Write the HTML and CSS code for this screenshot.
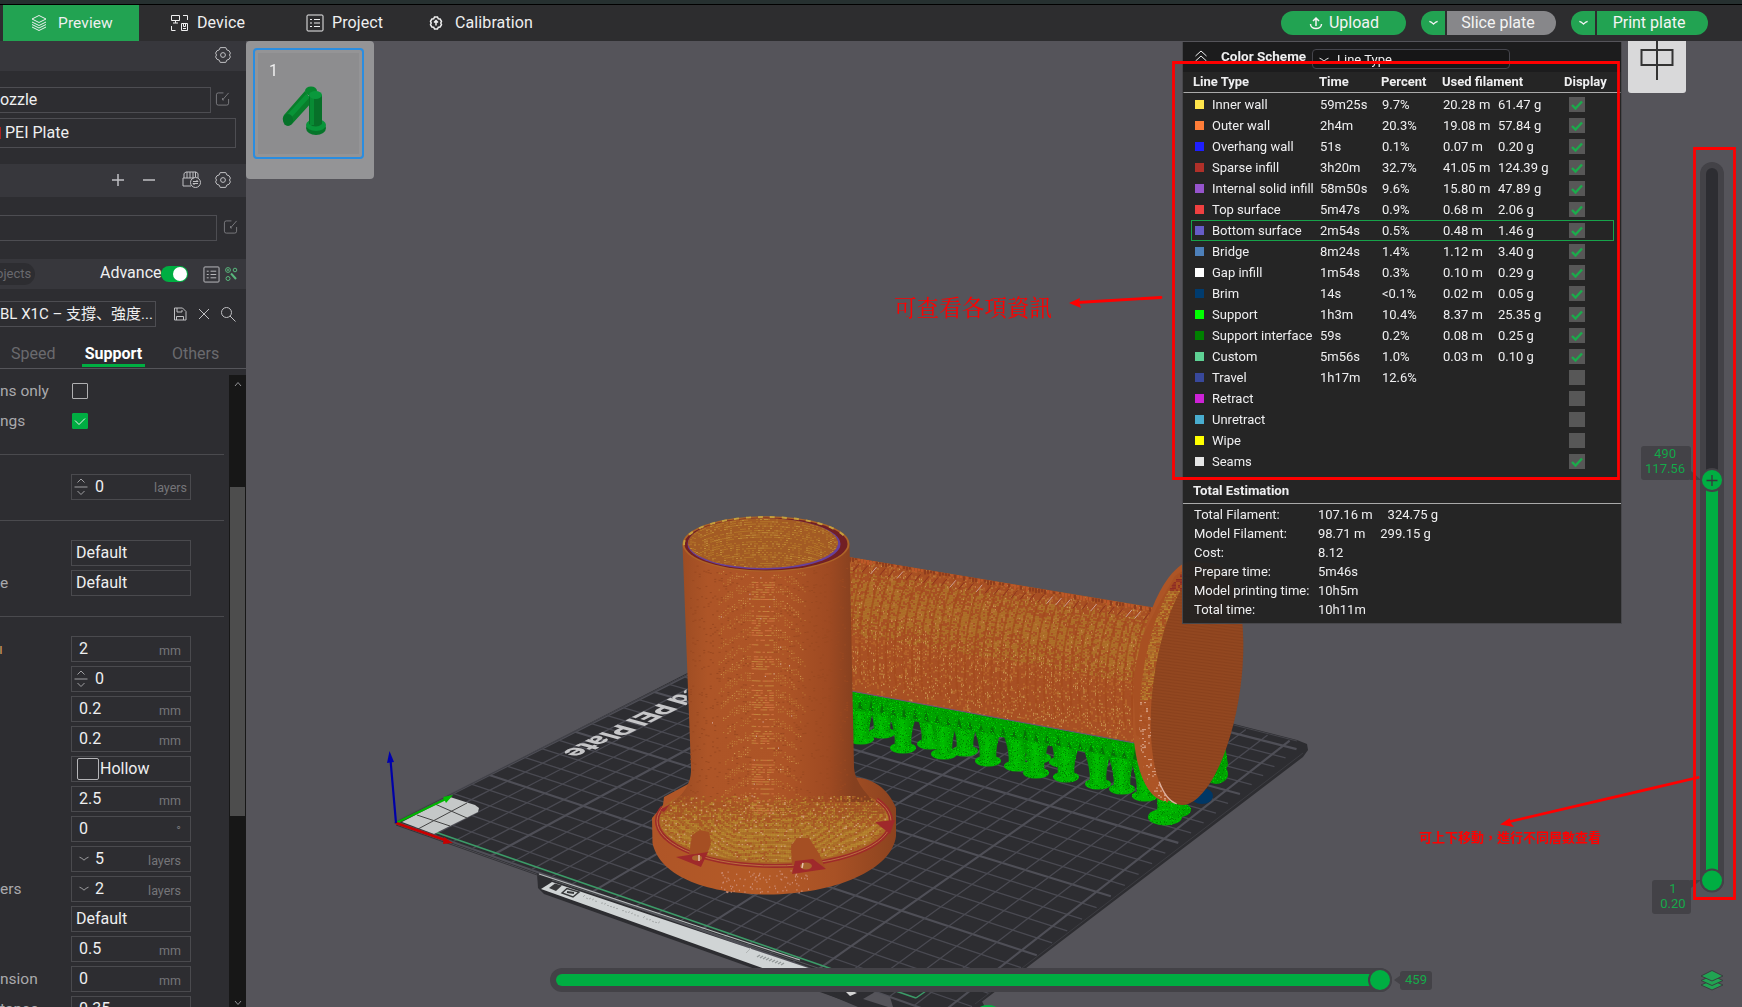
FILE: index.html
```html
<!DOCTYPE html>
<html lang="en">
<head>
<meta charset="utf-8">
<title>Slicer preview</title>
<link rel="stylesheet" href="styles.css">
</head>
<body>
<svg class="defs" width="0" height="0" aria-hidden="true">
  <symbol id="gear" viewBox="0 0 18 18"><path d="M6.2 1.6h5.6l1 2.3 2.3.9 1.3 2.3-.9 1.9.9 1.9-1.3 2.3-2.3.9-1 2.3H6.2l-1-2.3-2.3-.9-1.3-2.3.9-1.9-.9-1.9 1.3-2.3 2.3-.9z"/><circle cx="9" cy="9" r="2.4"/></symbol>
  <symbol id="edit" viewBox="0 0 16 16"><path d="M9 1.5H3.5a2 2 0 0 0-2 2v9a2 2 0 0 0 2 2h9a2 2 0 0 0 2-2V8M8 9l6.5-7.5M8 9v-2M8 9h1.5"/></symbol>
  <symbol id="list" viewBox="0 0 18 18"><rect x="1" y="1" width="16" height="16" rx="1"/><path d="M4 5.5h2M8 5.5h6M4 9h2M8 9h6M4 12.5h2M8 12.5h6"/></symbol>
  <symbol id="down" viewBox="0 0 12 8"><path d="M1.5 2.2Q4 3 6 5.2Q8 3 10.500 2.200"/></symbol>
  <symbol id="steps" viewBox="0 0 14 20"><path d="M3.500 5.500 7 2l3.500 3.500M.5 10h13M3.500 14 7 17.500 10.500 14"/></symbol>
</svg>
<div class="strip"></div>
<header class="bar">
  <nav class="tabs">
    <a class="tab preview on"><svg width="18" height="18" viewBox="0 0 18 18"><path d="M9 1.500 16 5 9 8.500 2 5zM2 8l7 3.500L16 8M2 10.500 9 14l7-3.500M2 13l7 3.500 7-3.500"/></svg>Preview</a>
    <a class="tab device"><svg width="19" height="18" viewBox="0 0 19 18"><path d="M1.500 1.500h8v5h-8zM5.500 6.500v2.500M3 9h5M13 1.500h4.500V6M1.500 12v4.500h4M11.500 9.500h6v7h-6zM13.500 9.500v3h2v-3M13 14.500h3"/></svg>Device</a>
    <a class="tab project"><svg width="18" height="18"><use href="#list"/></svg>Project</a>
    <a class="tab calib"><svg width="14" height="14" viewBox="0 0 14 14"><path d="M5.500 1h3l.8 1.700 1.800.3L12.500 5.300 11.800 7l.7 1.700-1.400 2.300-1.800.3-.8 1.700h-3l-.8-1.700-1.800-.3L1.500 8.700 2.200 7l-.7-1.700L2.900 3l1.800-.3zM7 4.500v5M5 6.500l2-2 2 2" stroke-width="1.500"/></svg>Calibration</a>
  </nav>
  <div class="actions">
    <button class="btn upload"><svg width="14" height="14" viewBox="0 0 14 14"><path d="M7 10V2M4 5l3-3 3 3M1.500 8c0 6 11 6 11 0" stroke-width="1.500"/></svg>Upload</button>
    <div class="split slice"><button class="drop"><svg width="11" height="8"><use href="#down"/></svg></button><button class="main">Slice plate</button></div>
    <div class="split print"><button class="drop"><svg width="11" height="8"><use href="#down"/></svg></button><button class="main">Print plate</button></div>
  </div>
</header>
<div class="work">
<aside class="side">
  <div class="head h1"><svg class="ic" width="18" height="18"><use href="#gear"/></svg></div>
  <div class="printer">
    <div class="line"><div class="field nozzle">ozzle</div><svg class="ic dim" width="15" height="16"><use href="#edit"/></svg></div>
    <div class="field plate"><i></i>PEI Plate</div>
  </div>
  <div class="head h2">
    <svg class="ic plus" width="14" height="14" viewBox="0 0 14 14"><path d="M1 7h12M7 1v12" stroke-width="1.500"/></svg>
    <svg class="ic minus" width="14" height="14" viewBox="0 0 14 14"><path d="M1 7h12" stroke-width="1.500"/></svg>
    <svg class="ic ams" width="19" height="18" viewBox="0 0 19 18"><path d="M2 7V2.500L4 1h10l2 1.500V7M1 7h11M1 7v8h8M5 1v6M8 1v6M11 1v6M13.500 1v5"/><circle cx="13.500" cy="11.500" r="5"/><path d="M11 10.500h5l-1.500-1.500M16 12.500h-5l1.500 1.500"/></svg>
    <svg class="ic" width="18" height="18"><use href="#gear"/></svg>
  </div>
  <div class="filament"><div class="field"></div><svg class="ic dim" width="15" height="16"><use href="#edit"/></svg></div>
  <div class="head h3"><span class="pill">ojects</span><span class="adv">Advance</span><span class="toggle"></span>
    <svg class="ic" width="17" height="17"><use href="#list"/></svg>
    <svg class="ic params" width="14" height="16" viewBox="0 0 14 16"><circle cx="4" cy="4" r="2.400"/><circle cx="4" cy="4" r=".6"/><circle cx="11" cy="4" r="1.800"/><circle cx="4" cy="12.500" r="2"/><path d="M7 7.500 12 13" stroke-width="2"/></svg></div>
  <div class="preset"><div class="field">BL X1C – 支撐、強度...</div>
    <svg class="ic save" width="14" height="14" viewBox="0 0 14 14"><path d="M1.500 1h8L13 4.500V13H1.500zM4 1v4h5V3M3.500 13V9.500h7V13M5 9.500h4"/></svg>
    <svg class="ic close" width="12" height="12" viewBox="0 0 12 12"><path d="m1 1 10 10M11 1 1 11"/></svg>
    <svg class="ic" width="16" height="16" viewBox="0 0 16 16"><circle cx="6.500" cy="6.500" r="5"/><path d="m10 10 5.500 5.500"/></svg></div>
  <div class="ptabs"><span>Speed</span><span class="on">Support</span><span>Others</span></div>
  <div class="pane">
    <div class="rows">
      <div class="row"><label>ns only</label><span class="check"></span></div>
      <div class="row"><label>ngs</label><span class="check yes"><svg width="12" height="9" viewBox="0 0 12 9"><path d="m1 3.500 4 4 6-6"/></svg></span></div>
      <hr>
      <div class="row"><label></label><div class="box step"><svg width="14" height="20"><use href="#steps"/></svg>0<em>layers</em></div></div>
      <hr>
      <div class="row"><label></label><div class="box opt">Default</div></div>
      <div class="row"><label>e</label><div class="box opt">Default</div></div>
      <hr>
      <div class="row"><label class="mod">ı</label><div class="box">2<em>mm</em></div></div>
      <div class="row"><label></label><div class="box step"><svg width="14" height="20"><use href="#steps"/></svg>0</div></div>
      <div class="row"><label></label><div class="box">0.2<em>mm</em></div></div>
      <div class="row"><label></label><div class="box">0.2<em>mm</em></div></div>
      <div class="row"><label></label><div class="box hollow"><span></span>Hollow</div></div>
      <div class="row"><label></label><div class="box">2.5<em>mm</em></div></div>
      <div class="row"><label></label><div class="box">0<em>°</em></div></div>
      <div class="row"><label></label><div class="box pick"><svg width="12" height="8"><use href="#down"/></svg>5<em>layers</em></div></div>
      <div class="row"><label>ers</label><div class="box pick"><svg width="12" height="8"><use href="#down"/></svg>2<em>layers</em></div></div>
      <div class="row"><label></label><div class="box opt">Default</div></div>
      <div class="row"><label></label><div class="box">0.5<em>mm</em></div></div>
      <div class="row"><label>nsion</label><div class="box">0<em>mm</em></div></div>
      <div class="row"><label>tance</label><div class="box">0.35</div></div>
    </div>
    <div class="scroll"><svg width="8" height="6" viewBox="0 0 8 6"><path d="m1 5 3-3.500L7 5"/></svg><div class="thumb"></div><svg width="8" height="6" viewBox="0 0 8 6"><path d="m1 1 3 3.500L7 1"/></svg></div>
  </div>
</aside>
<main class="view">
  <canvas id="scene" width="1496" height="966"></canvas>
  <svg class="over" viewBox="246 41 1496 966">
    <defs><clipPath id="vis"><path d="M246 41H682V560L689 760 640 800H246z"/></clipPath></defs>
    <g clip-path="url(#vis)"><text class="bed" text-anchor="end" transform="matrix(-.93 .47 -1.050 -.3 561 753)">Textured PEI Plate</text></g>
  </svg>
  <div class="plates"><div class="thumbnail"><span>1</span>
    <svg width="44" height="50" viewBox="0 0 44 50"><path d="M23 5 2 29q-3 5 1 8 3 3 7 1l20-22z" fill="#087e2b"/><path d="m24 8-20 22 4 3 20-22z" fill="#099437"/><ellipse cx="6" cy="34" rx="5" ry="6" fill="#06722a"/><ellipse cx="29" cy="5" rx="6" ry="4.500" fill="#07872f"/><ellipse cx="34" cy="42" rx="10" ry="7" fill="#06752a"/><ellipse cx="34" cy="39" rx="10" ry="6" fill="#08953a"/><path d="M27 9h13v29q-6 5-13 0z" fill="#077029"/><path d="M28 10h4v29h-4z" fill="#088b34"/><ellipse cx="33.500" cy="9" rx="6.500" ry="4" fill="#0a983c"/></svg></div></div>
  <div class="ime"><svg width="34" height="40" viewBox="0 0 34 40"><path d="M1.500 9h31v15h-31zM17 0v39"/></svg></div>
  <section class="legend">
    <div class="scheme"><svg width="12" height="12" viewBox="0 0 12 12"><path d="m.5 6 5.500-5 5.500 5M.5 11 6 6l5.500 5"/></svg><b>Color Scheme</b><div class="select"><svg width="12" height="8"><use href="#down"/></svg>Line Type</div></div>
    <div class="lrow lhead"><span>Line Type</span><span>Time</span><span>Percent</span><span>Used filament</span><span></span><span>Display</span></div>
    <div id="lines"></div>
    <div class="total">Total Estimation</div>
    <dl>
      <div><dt>Total Filament:</dt><dd>107.16 m</dd><dd>324.75 g</dd></div>
      <div><dt>Model Filament:</dt><dd>98.71 m</dd><dd>299.15 g</dd></div>
      <div><dt>Cost:</dt><dd>8.12</dd></div>
      <div><dt>Prepare time:</dt><dd>5m46s</dd></div>
      <div><dt>Model printing time:</dt><dd>10h5m</dd></div>
      <div><dt>Total time:</dt><dd>10h11m</dd></div>
    </dl>
  </section>
  <div class="vtrack"><i></i></div>
  <div class="tip top">490<br>117.56</div>
  <div class="tip low">1<br>0.20</div>
  <div class="htrack"></div>
  <div class="tip step459">459</div>
  <svg class="over" viewBox="246 41 1496 966">
    <g fill="#434247"><path d="M1690 470v10h11zM1690 880h11l-10 8zM1394 980l7-5v10z"/><circle cx="1712" cy="480" r="12"/><circle cx="1712" cy="880.500" r="12"/><circle cx="1380" cy="980" r="12"/></g>
    <g fill="#00ae42"><circle cx="1712" cy="480" r="10"/><circle cx="1712" cy="880.500" r="10"/><circle cx="1380" cy="980" r="10"/><ellipse cx="988" cy="1010" rx="10" ry="5"/></g>
    <path d="M1706.500 480.500h11M1712 475v11" stroke="#36363c" stroke-width="1.300"/>
    <g fill="#21a352" stroke="#3c3c40"><path d="m1701 985 11-5 11 5-11 5z"/><path d="m1701 980.500 11-5 11 5-11 5z"/><path d="m1701 976 11-5.500 11 5.500-11 5z"/></g>
    <g fill="none" stroke="#f00" stroke-width="2.800"><path d="M1173.500 62.500h445v416h-445zM1694.500 148.500h40v750h-40z"/><path d="M1161 297.500 1077 302.500M1698 777.500 1508 822" stroke-linecap="round"/></g>
    <path fill="#f00" d="m1069 303 11-5-1 4 2 6zM1500 824.500l10-6.500v4l4 5z"/>
  </svg>
  <p class="note n1">可查看各項資訊</p>
  <p class="note n2">可上下移動，進行不同層數查看</p>
</main>
</div>
<script src="scene.js"></script>
</body>
</html>
```
FILE: styles.css
```css
*{box-sizing:border-box}
body{margin:0;width:1742px;height:1007px;overflow:hidden;background:#2d2d31;color:#efeff0;font:16px/1.2 Roboto,"Noto Sans CJK TC",sans-serif;display:flex;flex-direction:column}
svg{fill:none;stroke:currentColor;flex:none}
.defs{position:absolute}
.strip{height:5px;background:#263030;border-bottom:1px solid #000;flex:none}
.bar{height:36px;flex:none;background:#2d2d2f;display:flex;justify-content:space-between;padding-right:34px}
.tabs{display:flex;padding-left:3px}
.tab{display:flex;align-items:center;letter-spacing:.1px}
.tab.on{background:#22a352}
.preview{width:136px;padding-left:27px;gap:10px;font-size:15.500px}
.device{padding-left:31px;width:167px;gap:8px}
.project{gap:8px;width:123px}
.calib{gap:12px}
.actions{display:flex;align-items:center;gap:15px}
button{border:0;margin:0;padding:0;background:#22a352;color:#f4f4f4;font:inherit;height:24px;display:flex;align-items:center;justify-content:center}
.upload{width:125px;border-radius:12px;gap:6px;padding-left:1px}
.split{display:flex;gap:2px}
.drop{width:24px;border-radius:12px 0 0 12px}
.main{border-radius:0 12px 12px 0;width:111px;padding-right:7px}
.slice .main{width:109px;background:#87878a}
.drop svg{stroke-width:1.300}
.work{display:flex;flex:1;min-height:0}
.side{width:246px;flex:none;display:flex;flex-direction:column;overflow:hidden}
.head{background:#37373c;display:flex;align-items:center;justify-content:flex-end;flex:none}
.ic{color:#c0c0c3}
.dim{color:#7c7c80}
.h1{height:30px;padding:0 14px 2px 0}
.field{border:1px solid #4d4d52;border-left:0;height:26px;display:flex;align-items:center}
.printer{height:93px;padding-top:16px;display:flex;flex-direction:column;gap:5px}
.line{display:flex;align-items:center;gap:4px}
.line .dim,.filament .dim{margin-bottom:2px}
.nozzle{width:211px}
.plate{width:236px;height:30px;gap:4px}
.plate i{width:1px;height:12px;background:#a22}
.h2{height:33px;padding:0 14px 2px 0}
.plus{margin-right:17px}.minus{margin-right:26px}.ams{margin-right:13px}
.filament{height:62px;display:flex;align-items:center;gap:6px}
.filament .field{width:217px}
.h3{height:30px;justify-content:flex-start}
.pill{background:#2d2d31;color:#69696e;font-size:13px;width:35px;height:22px;line-height:21px;border-radius:0 11px 11px 0;margin-right:65px;text-indent:-4px}
.adv{width:61px;padding-bottom:2px}
.toggle{width:27px;height:16px;border-radius:8px;background:#00ae42;margin-right:15px;padding:1px;display:flex;justify-content:flex-end}
.toggle::after{content:"";width:14px;height:14px;border-radius:7px;background:#fff}
.params{color:#58b77c;margin-left:4px}
.preset{height:50px;display:flex;align-items:center}
.preset .field{width:156px;margin-right:17px;white-space:nowrap;font:15px/1.2 Roboto,"Noto Sans CJK SC",sans-serif}
.save{margin-right:11px}.close{margin-right:10px}
.ptabs{height:30px;flex:none;border-bottom:1px solid #55555a;display:flex;padding-left:11px;color:#6a6a6e}
.ptabs span{padding-top:5px;height:30px;width:43px;margin-right:28px;white-space:nowrap}
.ptabs .on{color:#fff;font-weight:700;width:63px;margin-right:27px;text-align:center;border-bottom:3px solid #00ae42;height:28px}
.pane{flex:1;display:flex;justify-content:space-between;min-height:0;padding-top:6px}
.rows{width:224px;padding-top:1px;overflow:hidden}
.row{height:30px;display:flex;align-items:center}
.row label{width:71px;color:#a9a9ac;flex:none;white-space:nowrap;font-size:15.500px}
.row .mod{color:#c79157;text-indent:-1px}
hr{border:0;height:36px;margin:0;background:linear-gradient(#4a4a4e,#4a4a4e) 0 18px/100% 1px no-repeat}
.check{width:16px;height:16px;border:1px solid #b0b0b2;border-radius:1px;margin-left:1px;display:flex;align-items:center;justify-content:center}
.yes{background:#00ae42;border-color:#00ae42}
.box{border:1px solid #4a4a4e;width:120px;height:26px;padding:0 9px 1px 7px;display:flex;align-items:center}
.box em{font-style:normal;font-size:12.500px;color:#757579;margin-left:auto;padding-top:4px}
.step{padding-left:2px;gap:7px}.step em{padding-top:2px;margin-right:-6px}.step svg,.pick svg{color:#a0a0a3}
.pick{gap:5px;padding-left:6px}
.opt{padding-left:4px}
.hollow{padding-left:5px;gap:1px}
.hollow span{width:22px;height:22px;border:1.500px solid #b5b5b8;border-radius:2px;margin-top:1px}
.scroll{width:17px;background:#171717;padding:6px 1px 1px;display:flex;flex-direction:column;align-items:center;color:#909093}
.thumb{height:329px;width:15px;background:#4d4d4d;margin:100px 0 auto}
.view{position:relative;flex:1;background:#55545a;overflow:hidden}
#scene,.over{position:absolute;left:0;top:0;width:1496px;height:966px}
.over{stroke:none}
.bed{font:800 25px Inter,sans-serif;fill:#c6c6c8}
.plates{position:absolute;left:0;top:0;width:128px;height:138px;border-radius:4px;background:#949496;padding:7px}
.thumbnail{width:111px;height:111px;border:2px solid #2a8de0;border-radius:4px;background:#8d8d8f;box-shadow:inset 0 0 0 3px #949496;position:relative;font-size:16px}
.thumbnail span{position:absolute;left:14px;top:11px}
.thumbnail svg{position:absolute;left:27px;top:36px;stroke:none}
.ime{position:absolute;left:1382px;top:-7px;width:58px;height:59px;background:#d9d9da;border-radius:3px;padding:7px 12px;color:#333}
.ime svg{stroke-width:2}
.legend{position:absolute;left:936px;top:1px;width:440px;height:582px;background:rgba(34,34,34,.94);font-size:13px;border:1px solid #47474b;border-top:0}
.scheme{height:30px;background:#1c1c1d;display:flex;padding:0 0 0 12px}
.scheme svg{margin-top:8px}.scheme b{margin:6px 0 0 14px;width:91px;font-size:13.500px}
.select{width:198px;height:20px;margin-top:7px;border:1px solid #45454c;border-radius:4px;display:flex;gap:7px;padding:2px 5px;background:#161617}
.select svg{margin-top:4px}
.lrow{display:grid;grid-template-columns:125px 62px 61px 55px 71px 1fr;height:21px;align-items:center;margin:0 7px 0 8px;padding-left:3px;white-space:nowrap;line-height:15px;border:1px solid transparent}
.lhead{margin:0 0 1px;padding:0 0 2px 9px;font-weight:700;border-bottom-color:#aaa;grid-template-columns:126px 62px 61px 55px 67px 1fr}
.name{display:flex;align-items:center;gap:8px}
.sw{width:9px;height:9px}
.cb{width:16px;height:15px;background:#575757;display:flex;align-items:center;justify-content:center;color:#1bab4b}
.cb svg{stroke-width:2.400}
.hot{border-color:#17a34a}
.total{height:27px;margin-top:5px;padding:5px 0 0 10px;font-weight:700;border-bottom:1px solid #aaa;font-size:13.200px;line-height:18px}
dl{margin:1px 0 0;padding-left:11px}
dl div{height:19px;display:flex;align-items:center;line-height:15px}
dt{width:124px}
dd{margin:0 15px 0 0}
.vtrack{position:absolute;left:1454px;top:121px;width:24px;height:730px;border-radius:12px;background:#434247;padding:6px}
.vtrack i{display:block;height:100%;border-radius:6px;background:linear-gradient(#2d2d32 312px,#00ae42 312px)}
.htrack{position:absolute;left:304px;top:927px;width:842px;height:24px;border-radius:12px;background:#434247;padding:6px}
.htrack::after{content:"";display:block;height:12px;border-radius:6px;background:#00ae42}
.tip{position:absolute;background:#434247;color:#16a94a;font-size:13px;line-height:15px;border-radius:3px;text-align:center}
.top{left:1395px;top:405px;width:50px;height:34px;padding-right:2px}
.low{left:1406px;top:839px;width:39px;height:34px;padding:1px 0 0 3px}
.step459{left:1154px;top:930px;width:32px;height:19px;line-height:18px}
.note{position:absolute;margin:0;color:#f00;white-space:nowrap;line-height:1}
.n1{left:648px;top:254px;font-size:22.600px;font-family:"Noto Serif CJK TC","Noto Sans CJK TC",serif}
.n2{left:1173px;top:789px;font:700 13px/1 "Noto Sans CJK TC",sans-serif}
```
FILE: scene.js
```js
// Legend rows: name, colour, time, percent, length, weight, shown
const rows = [
  ['Inner wall','#ffe54c','59m25s','9.7%','20.28 m','61.47 g',1],
  ['Outer wall','#ff7d38','2h4m','20.3%','19.08 m','57.84 g',1],
  ['Overhang wall','#1f1fff','51s','0.1%','0.07 m','0.20 g',1],
  ['Sparse infill','#b03029','3h20m','32.7%','41.05 m','124.39 g',1],
  ['Internal solid infill','#9654cc','58m50s','9.6%','15.80 m','47.89 g',1],
  ['Top surface','#f04040','5m47s','0.9%','0.68 m','2.06 g',1],
  ['Bottom surface','#665cc7','2m54s','0.5%','0.48 m','1.46 g',1],
  ['Bridge','#4d80ba','8m24s','1.4%','1.12 m','3.40 g',1],
  ['Gap infill','#ffffff','1m54s','0.3%','0.10 m','0.29 g',1],
  ['Brim','#003b6e','14s','<0.1%','0.02 m','0.05 g',1],
  ['Support','#00ff00','1h3m','10.4%','8.37 m','25.35 g',1],
  ['Support interface','#008000','59s','0.2%','0.08 m','0.25 g',1],
  ['Custom','#5ed194','5m56s','1.0%','0.03 m','0.10 g',1],
  ['Travel','#38489b','1h17m','12.6%','','',0],
  ['Retract','#cd22d6','','','','',0],
  ['Unretract','#49adcf','','','','',0],
  ['Wipe','#ffff00','','','','',0],
  ['Seams','#e6e6e6','','','','',1]];
const tick = '<svg width="12" height="10" viewBox="0 0 12 10"><path d="m1 5 3.500 3.500L11 1.500"/></svg>';
document.getElementById('lines').innerHTML = rows.map(r =>
  `<div class="lrow${r[0] === 'Bottom surface' ? ' hot' : ''}"><span class="name"><i class="sw" style="background:${r[1]}"></i>${r[0]}</span>` +
  `<span>${r[2]}</span><span>${r[3].replace('<','&lt;')}</span><span>${r[4]}</span><span>${r[5]}</span><span class="cb">${r[6] ? tick : ''}</span></div>`).join('');

const c = document.getElementById('scene').getContext('2d', {willReadFrequently: true});
c.translate(-246, -41);
let seed = 7;
const rnd = () => (seed = (seed * 16807) % 2147483647) / 2147483647;
const poly = (pts, fill) => { c.beginPath(); pts.forEach((p, i) => i ? c.lineTo(p[0], p[1]) : c.moveTo(p[0], p[1])); c.closePath(); c.fillStyle = fill; c.fill(); };
const line = (a, b, col, w) => { c.beginPath(); c.moveTo(a[0], a[1]); c.lineTo(b[0], b[1]); c.strokeStyle = col; c.lineWidth = w; c.stroke(); };
const ell = (x, y, rx, ry, fill, rot = 0) => { c.beginPath(); c.ellipse(x, y, rx, ry, rot, 0, 7); c.fillStyle = fill; c.fill(); };

// Bed, projected from unit square corners: origin, front, right, back
const P = [[396,822],[955,1020],[1303,744],[803,617]];
const dx1 = P[1][0]-P[2][0], dx2 = P[3][0]-P[2][0], sx = P[0][0]-P[1][0]+P[2][0]-P[3][0];
const dy1 = P[1][1]-P[2][1], dy2 = P[3][1]-P[2][1], sy = P[0][1]-P[1][1]+P[2][1]-P[3][1];
const den = dx1*dy2-dx2*dy1, g = (sx*dy2-dx2*sy)/den, h = (dx1*sy-sx*dy1)/den;
const proj = (u, v) => { const w = g*u+h*v+1;
  return [((P[1][0]-P[0][0]+g*P[1][0])*u+(P[3][0]-P[0][0]+h*P[3][0])*v+P[0][0])/w,
          ((P[1][1]-P[0][1]+g*P[1][1])*u+(P[3][1]-P[0][1]+h*P[3][1])*v+P[0][1])/w]; };
poly([[537,873],[538,888],[544,894],[862,1007],[985,1007],[960,960]], '#2d2d31');
poly([[394,823],[803,614],[1297,740],[1307,744],[1308,750],[1303,757],[975,1007],[920,1010]], '#2d2d31');
for (let i = 0; i <= 25; i++) {
  const t = i/25.6, bold = i % 5 === 0, col = bold ? '#4f4f57' : '#4a4a52', w = bold ? 2.1 : 1.3;
  line(proj(t,0), proj(t,1), col, w); line(proj(0,t), proj(1,t), col, w);
}
line([396,822],[803,616],'#3f3f45',1); line([803,616],[1297,741],'#45454b',1);
line([1303,753],[975,1004],'#3c3c41',1); line([396,825],[540,876],'#35353a',1);
poly([[541,889],[552,882],[850,982],[810,985]], '#d0d4d5');
line([539,874],[800,960],'#b7bbbb',1.300);
line([552,880],[830,972],'#54575a',1);
poly([[549,888],[555,883.500],[562,885.500],[556,891]],'#37383a');
c.strokeStyle='#37383a'; c.lineWidth=1.500; c.beginPath(); c.moveTo(562,893); c.lineTo(567,888.500); c.lineTo(579,892); c.lineTo(573,897); c.closePath(); c.stroke(); line([567,892],[574,893],'#37383a',2);
for (let i=0;i<26;i++){ if(i%7===5)continue; const x=583+i*3,y=897+i*1.05; line([x,y],[x+2,y-2+rnd()*3],'#a8acac',1); }
line([746,953],[751,948],'#b0b4b4',1); for(let i=0;i<9;i++) line([757+i*3,957+i],[760+i*3,955+i],'#929797',1.300);
line([435,832],[916,998],'#3c9b68',1.700); line([916,998],[926,991],'#3c9b68',1.500);
poly([[846,992],[852,991],[857,993],[850,996]],'#d5d5d5');
poly([[863,999],[875,992],[890,997],[893,1007],[888,1007]],'#55545a');
poly([[820,991],[830,991],[866,1007],[858,1007]],'#2d2d31');
// Corner tile and axes
poly([[402,822],[450,797],[475,805],[479,808],[478,812],[434,834]], '#c5c8c8');
line([417,815],[450,826],'#444',1); line([435,804],[467,818],'#444',1); line([418,829],[467,803],'#444',1);
line([396,823],[450,797],'#00b400',2); poly([[443,797],[453,795],[446,803]],'#00c000');
line([396,823],[445,840],'#c80000',2.500); poly([[444,837],[453,843],[443,844]],'#c80000');
line([396,823],[390.500,760],'#0000a8',2.200); poly([[387,763],[389.500,751],[394,762]],'#0000b0');

// Tree supports below the lying part
const low = x => 691 + (x-852)*.185;
const trees = [[882,733],[930,744],[965,751],[1038,758],[1062,762],[861,739],[903,748],[944,754],[988,761],[1017,766],[1036,773],[1066,777],[1098,784],[1122,789],[1145,796]];
for (const [x,y] of trees) {
  const top = low(x)-6;
  const gr = c.createLinearGradient(x-13,0,x+13,0); gr.addColorStop(0,'#009000'); gr.addColorStop(.45,'#00bd00'); gr.addColorStop(1,'#009200');
  ell(x,y,13,5.500,'#00b500');
  c.beginPath(); c.moveTo(x-9,y); c.quadraticCurveTo(x-5,y-16,x-22,top); c.lineTo(x-5,top); c.lineTo(x,y-30); c.lineTo(x+5,top); c.lineTo(x+22,top); c.quadraticCurveTo(x+5,y-16,x+9,y); c.fillStyle=gr; c.fill();
}
poly([[852,684],[1140,738],[1140,762],[852,710]],'#00a200');
for (let x=858;x<1140;x+=11) { const d=10+rnd()*12; poly([[x,low(x)+16],[x+2,low(x)+16-d*.5],[x+5,low(x)+18]],'#087008'); }
ell(1216,774,12,10,'#00a800'); poly([[1214,780],[1225,745],[1228,765],[1219,784]],'#00a000');
ell(1202,796,11,8,'#003765');
ell(1165,817,17,8.500,'#00b400'); ell(1174,810,17,8,'#00a800'); poly([[1157,798],[1180,800],[1184,812],[1158,815]],'#00b000');
const shot = c.getImageData(0,0,1496,966).data;
for (let i=0;i<7000;i++){ const x=Math.floor(850+rnd()*385), y=Math.floor(Math.min(low(x),745)+rnd()*85), o=((y-41)*1496+x-246)*4; if(shot[o+1]>100&&shot[o]<20){c.fillStyle=rnd()<.5?'#008a00':'#00cc00'; c.fillRect(x,y,1,1);} }

// Lying cylinder
c.save(); c.beginPath(); c.moveTo(849,557); c.lineTo(1157,608); c.lineTo(1142,744); c.lineTo(851,691); c.closePath(); c.clip();
const skew = (x,t) => 557+(x-849)*.168 + t*(134+(x-849)*.006);
c.fillStyle='#a85224'; c.fillRect(840,540,330,220);
for (let t=0;t<1;t+=.012) {
  const k = Math.max(0, 1-Math.abs(t-.32)/.38);
  for (let x=849;x<1160;x+=2) {
    const r=rnd(); c.fillStyle = r<.12+.6*k ? (k>.35?'#ad7029':'#b4632a') : r<.92 ? '#a85024' : '#b87636';
    c.fillRect(x, skew(x,t), 2, 1.700);
    if (rnd()<(t>.45&&t<.95?.1:.03)) { c.fillStyle='#c8914f'; c.fillRect(x,skew(x,t),1,1.500); }
  }
}
for (let x=842;x<1175;x+=8.800) {
  c.beginPath(); c.moveTo(x+18,skew(x+18,0)); c.quadraticCurveTo(x+3,skew(x,.22),x,skew(x,.58)); c.quadraticCurveTo(x-1,skew(x,.8),x+2,skew(x,.92)); c.strokeStyle='rgba(163,72,29,.7)'; c.lineWidth=1.900; c.stroke();
  line([x+17,skew(x+17,.04)],[x+11,skew(x+11,.1)], rnd()<.35?'#cda097':'#8d3421',1);
}
for (let x=849;x<1160;x+=3) { c.fillStyle=rnd()<.4?'#bd5828':'#8f3d1d'; c.fillRect(x,skew(x,0),2,2+rnd()*3); }
c.restore();
line([851,691],[1140,744],'#75507a',1);

// Flange disc of the lying part
c.save(); c.beginPath(); c.ellipse(1180,681,45,121,.13,0,7); c.clip();
c.fillStyle='#ad5526'; c.fillRect(1120,550,130,265);
c.restore();
poly([[1157,607],[1175,576],[1192,564],[1208,563],[1200,570],[1160,640],[1145,740],[1136,735],[1133,680],[1141,640]],'#a85022');
c.save(); c.beginPath(); c.ellipse(1185,683,43,121,.14,0,7); c.clip();
for(let y=570;y<806;y+=1.5) for(let x=1132;x<1200;x+=2){ const r=rnd(); if (r<.75) { c.fillStyle = y<590?'#8f2c24' : y<700?(r<.4?'#b9832f':'#a96a2a') : (r<.12?'#d39a7c':'#ad5526'); c.fillRect(x,y,2,1.200);} }
c.restore();
ell(1197,684,43.500,122,'#924720',.14);
c.save(); c.beginPath(); c.ellipse(1197,684,43.500,122,.14,0,7); c.clip(); for(let y=560;y<806;y+=3) line([1150,y],[1245,y+12],'rgba(112,52,22,.22)',1); c.restore();
c.beginPath(); c.ellipse(1197,684,43.500,122,.14,1.650,2.150); c.strokeStyle='#ddb0a0'; c.lineWidth=1.300; c.stroke();

// Standing part: flange
const wall = c.createLinearGradient(652,0,896,0); wall.addColorStop(0,'#af5527'); wall.addColorStop(.45,'#b45b27'); wall.addColorStop(.75,'#a85125'); wall.addColorStop(1,'#8c431f');
c.fillStyle=wall; c.beginPath(); c.moveTo(652,818); c.lineTo(652.500,843); c.bezierCurveTo(660,878,710,894,768,894.500); c.bezierCurveTo(835,894,892,870,896,836); c.lineTo(896,808); c.bezierCurveTo(888,788,872,777,850,777); c.lineTo(690,783); c.lineTo(664,797); c.lineTo(663,805); c.closePath(); c.fill();
for(let i=0;i<90;i++){c.fillStyle='#cf9079';c.fillRect(720+rnd()*90,870+rnd()*22,1,1.500);}
ell(774,822,118,43,'#a96227');
c.lineWidth=4; c.strokeStyle='#9f2b29'; c.beginPath(); c.ellipse(774,821,117,45,0,-.5,.1); c.stroke(); c.beginPath(); c.ellipse(774,821,117,45,0,.2,3.450); c.stroke();
c.lineWidth=1; c.strokeStyle='#bb7141'; c.beginPath(); c.ellipse(774,821,117,45,0,-.5,3.450); c.stroke();
// Fillet and barrel
const bar = c.createLinearGradient(682,0,854,0); bar.addColorStop(0,'#9d4c23'); bar.addColorStop(.15,'#ae5527'); bar.addColorStop(.6,'#ad5426'); bar.addColorStop(.85,'#9f4a22'); bar.addColorStop(1,'#86401f');
c.fillStyle=bar; c.beginPath(); c.moveTo(682.500,544); c.lineTo(691,768); c.bezierCurveTo(692,790,675,801,660,812); c.bezierCurveTo(680,826,870,826,886,812); c.bezierCurveTo(868,797,855,783,854,768); c.lineTo(849.500,544); c.closePath(); c.fill();
// Cone surface: orange near the barrel, turning yellow toward the front edge
c.save(); c.beginPath(); c.ellipse(774,820,114,42,0,0,7); c.clip();
for(let y=796;y<864;y+=1.5) for(let x=660;x<888;x+=1.7){
  const k=Math.min(1,Math.max(0,(y-798)/34)), d=Math.hypot((x-770)/114,(y-790)/72);
  const moire=.5+.5*Math.sin(d*90+Math.cos(Math.abs(x-770)*.09)*3), r=rnd();
  c.fillStyle = r<k*.72+moire*.18 ? (moire>.5?'#b6852f':'#ab7029') : (r<.96?'#a85725':'#cf9b6b');
  if (r>.985 || k>.08 || r<.3) c.fillRect(x,y,1.800,1.500);
}
c.restore();
// Layer banding of the barrel
for (let y=548;y<786;y+=2.400) for (let x=690;x<848;x+=2.200) {
  const u=(x-766)/84, a=Math.abs(u+.06), yy=y+27*Math.sqrt(Math.max(0,1-u*u));
  const wave=.5+.5*Math.sin(y*.42-a*a*38), k=Math.max(0,1-a/.66), edge=y>690?.72:1;
  if (a<.13) { if (Math.sin(y*1.1)+Math.sin(y*.17)>-.5 && rnd()<.62) { c.fillStyle=rnd()<.6?'#c4863d':'#cf7440'; c.fillRect(x,yy,2.400,1); } }
  else if (wave*k*edge>.2 && rnd()<.62) { c.fillStyle=rnd()<.8?'#bd7b36':'#d0994f'; c.fillRect(x,yy,1.200,1); }
  else if (rnd()<.12) { c.fillStyle='#9a4921'; c.fillRect(x,yy,2,1); }
  if (rnd()<.01*k) { c.fillStyle='#d9b0a6'; c.fillRect(x,yy,1,1.200); }
}
// Bolt recesses
poly([[689,855],[692,835],[700,830],[709,832],[711,842],[708,853]],'#a54f23');
poly([[792,865],[791,846],[797,838],[809,838],[820,855],[825,868]],'#a54f23');
poly([[676,857],[708,852],[701,867]],'#9f292b'); poly([[792,874],[795,861],[813,859],[826,869]],'#9f292b');
poly([[875,822],[895,820],[890,834]],'#9f292b'); poly([[660,810],[670,804],[664,812]],'#9f292b');
ell(697,858,5,2.800,'#a9642d'); ell(806,866,6,3.500,'#a9642d'); line([699,855],[699,861],'#e8c2b0',1.500); line([803,863],[802,868],'#e8c2b0',1.500);
// Rim and bore
ell(766,544,83.500,27.800,'#ad6427'); ell(766,544,81.500,26.500,'#721f24');
c.save(); c.setLineDash([5,7]); c.strokeStyle='#c5a13d'; c.lineWidth=2; c.beginPath(); c.ellipse(766,544,82,27,0,3.100,6.100); c.stroke(); c.restore();
ell(764,544,76.500,25.500,'#67409a'); ell(763,543,75,25,'#a35b24');
c.save(); c.beginPath(); c.ellipse(763,543,75,24.800,0,0,7); c.clip();
for(let i=0;i<24;i++) for(let x=688;x<840;x+=2){const u=(x-763)/76,y=543-25*Math.sqrt(Math.max(0,1-u*u))+i*2.200+1; const dark=i%5===4; if(rnd()<(dark?.25:.58)){c.fillStyle=rnd()<.75?'#b37629':'#c08d38';c.fillRect(x,y,2,1);}}
c.restore();
```
